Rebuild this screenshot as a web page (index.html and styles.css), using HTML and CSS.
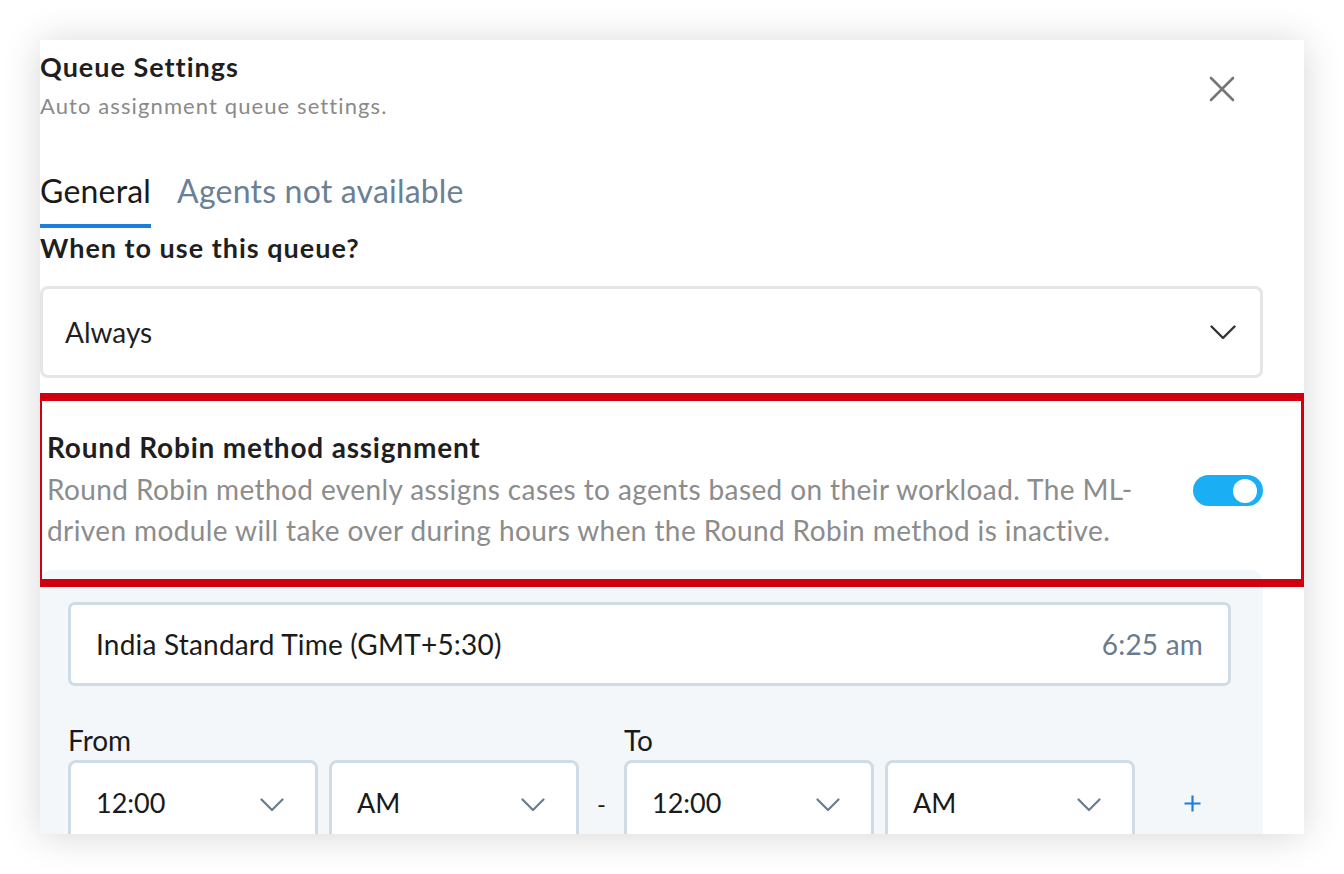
FILE: index.html
```html
<!DOCTYPE html>
<html lang="en">
<head>
<meta charset="utf-8">
<title>Queue Settings</title>
<link rel="stylesheet" href="styles.css">
</head>
<body>
<div class="page">
  <div class="panel">
    <header class="head">
      <div class="head-text">
        <h1 class="title">Queue Settings</h1>
        <p class="sub">Auto assignment queue settings.</p>
      </div>
      <button class="close" type="button" aria-label="Close">
        <svg width="26" height="26" viewBox="0 0 26 26"><path d="M2 2L24 24M24 2L2 24" stroke="#767676" stroke-width="2.6" stroke-linecap="round" fill="none"/></svg>
      </button>
    </header>

    <nav class="tabs">
      <span class="tab active">General</span>
      <span class="tab">Agents not available</span>
    </nav>

    <h2 class="q">When to use this queue?</h2>
    <div class="dropdown">
      <span>Always</span>
      <svg width="26" height="15" viewBox="0 0 26 15"><path d="M1.5 1.5L13 13L24.5 1.5" stroke="#333" stroke-width="2.4" fill="none" stroke-linecap="round" stroke-linejoin="round"/></svg>
    </div>

    <section class="rr">
      <div class="rr-text">
        <h3 class="rr-title">Round Robin method assignment</h3>
        <p class="rr-desc">Round Robin method evenly assigns cases to agents based on their workload. The ML-<br>driven module will take over during hours when the Round Robin method is inactive.</p>
      </div>
      <span class="toggle"><span class="knob"></span></span>
    </section>

    <div class="schedule">
      <div class="tz">
        <span>India Standard Time (GMT+5:30)</span>
        <span class="now">6:25 am</span>
      </div>
      <div class="range">
        <div class="col">
          <label class="lbl">From</label>
          <div class="pair">
            <div class="sel"><span>12:00</span><svg class="chev" width="24" height="14" viewBox="0 0 24 14"><path d="M1.5 1.5L12 12L22.5 1.5" stroke="#6a7c90" stroke-width="2.2" fill="none" stroke-linecap="round" stroke-linejoin="round"/></svg></div>
            <div class="sel"><span>AM</span><svg class="chev" width="24" height="14" viewBox="0 0 24 14"><path d="M1.5 1.5L12 12L22.5 1.5" stroke="#6a7c90" stroke-width="2.2" fill="none" stroke-linecap="round" stroke-linejoin="round"/></svg></div>
          </div>
        </div>
        <span class="dash">-</span>
        <div class="col">
          <label class="lbl">To</label>
          <div class="pair">
            <div class="sel"><span>12:00</span><svg class="chev" width="24" height="14" viewBox="0 0 24 14"><path d="M1.5 1.5L12 12L22.5 1.5" stroke="#6a7c90" stroke-width="2.2" fill="none" stroke-linecap="round" stroke-linejoin="round"/></svg></div>
            <div class="sel"><span>AM</span><svg class="chev" width="24" height="14" viewBox="0 0 24 14"><path d="M1.5 1.5L12 12L22.5 1.5" stroke="#6a7c90" stroke-width="2.2" fill="none" stroke-linecap="round" stroke-linejoin="round"/></svg></div>
          </div>
        </div>
        <span class="plus"><svg width="17" height="17" viewBox="0 0 17 17"><path d="M8.5 0.5V16.5M0.5 8.5H16.5" stroke="#1b7fd9" stroke-width="2.2" fill="none"/></svg></span>
      </div>
    </div>

    <div class="mark"></div>
  </div>
</div>
</body>
</html>
```

FILE: styles.css
```css
* { box-sizing: border-box; margin: 0; padding: 0; }

body {
  background: #ffffff;
  font-family: "Lato", "Noto Sans", sans-serif;
  color: #1f1f1f;
}

.page { padding: 40px; }

.panel {
  position: relative;
  width: 1264px;
  height: 794px;
  overflow: hidden;
  background: #ffffff;
  box-shadow: 0 2px 36px rgba(0, 0, 0, 0.16);
  padding: 12px 41px 0 0;
}

.head {
  display: flex;
  justify-content: space-between;
  align-items: center;
}

.title {
  font-size: 27px;
  line-height: 30px;
  font-weight: 700;
  letter-spacing: 1px;
  color: #1f1f1f;
}

.sub {
  margin-top: 11px;
  font-size: 22px;
  line-height: 26px;
  color: #8a8a8a;
  letter-spacing: 1.1px;
}

.close {
  width: 26px;
  height: 26px;
  margin-right: 28px;
  margin-top: 6px;
  border: 0;
  background: none;
  display: flex;
}

.tabs {
  display: flex;
  gap: 26px;
  margin-top: 55px;
}

.tab {
  font-size: 32px;
  line-height: 34px;
  letter-spacing: 0.2px;
  padding-bottom: 16px;
  border-bottom: 4px solid transparent;
  color: #6b7f95;
}

.tab.active {
  color: #1a1a1a;
  border-bottom-color: #1b7fd9;
}

.q {
  margin-top: 6px;
  font-size: 27px;
  line-height: 28px;
  font-weight: 700;
  letter-spacing: 1px;
  color: #1f1f1f;
}

.dropdown {
  margin-top: 24px;
  height: 92px;
  border: 3px solid #e6e6e6;
  border-radius: 8px;
  padding: 0 24px 0 22px;
  display: flex;
  align-items: center;
  justify-content: space-between;
  font-size: 28px;
  line-height: 30px;
  color: #1f1f1f;
}

.rr {
  margin-top: 14px;
  padding: 40px 0 0 7px;
  display: flex;
  align-items: center;
  justify-content: space-between;
}

.rr-title {
  font-size: 28px;
  line-height: 30px;
  font-weight: 700;
  letter-spacing: 0.8px;
  color: #1f1f1f;
}

.rr-desc {
  margin-top: 7px;
  font-size: 28px;
  line-height: 41px;
  color: #8c8c8c;
  letter-spacing: 0.4px;
}

.toggle {
  position: relative;
  width: 70px;
  height: 31px;
  border-radius: 16px;
  background: #1aaff5;
  margin-bottom: 2px;
  flex: none;
}

.knob {
  position: absolute;
  right: 6px;
  top: 3.5px;
  width: 24px;
  height: 24px;
  border-radius: 50%;
  background: #ffffff;
}

.schedule {
  margin-top: 19px;
  background: #f3f7fa;
  border-radius: 12px 12px 0 0;
  padding: 32px 32px 0 28px;
}

.tz {
  height: 84px;
  border: 3px solid #cfdbe5;
  border-radius: 7px;
  background: #ffffff;
  display: flex;
  align-items: center;
  justify-content: space-between;
  padding: 0 25px;
  font-size: 28px;
  line-height: 32px;
  letter-spacing: 0.2px;
  color: #1a1a1a;
}

.now { color: #6a7b8e; }

.range {
  margin-top: 38px;
  display: flex;
  align-items: flex-end;
}

.lbl {
  display: block;
  font-size: 28px;
  line-height: 32px;
  color: #1a1a1a;
  margin-bottom: 4px;
}

.pair {
  display: flex;
  gap: 11px;
}

.sel {
  width: 250px;
  height: 86px;
  border: 3px solid #cfdbe5;
  border-radius: 8px;
  background: #ffffff;
  display: flex;
  align-items: center;
  justify-content: space-between;
  padding: 0 31px 0 25px;
  font-size: 27px;
  line-height: 32px;
  color: #1a1a1a;
}

.chev { margin-top: 4px; }

.dash {
  width: 45px;
  height: 86px;
  display: flex;
  align-items: center;
  justify-content: center;
  font-size: 24px;
  color: #1a1a1a;
}

.plus {
  height: 86px;
  display: flex;
  align-items: center;
  margin-left: 49px;
}

.mark {
  position: absolute;
  left: 0;
  top: 353px;
  width: 1264px;
  height: 194px;
  border-style: solid;
  border-color: #d0000f;
  border-width: 8px 3px 8px 2px;
  pointer-events: none;
}
```
